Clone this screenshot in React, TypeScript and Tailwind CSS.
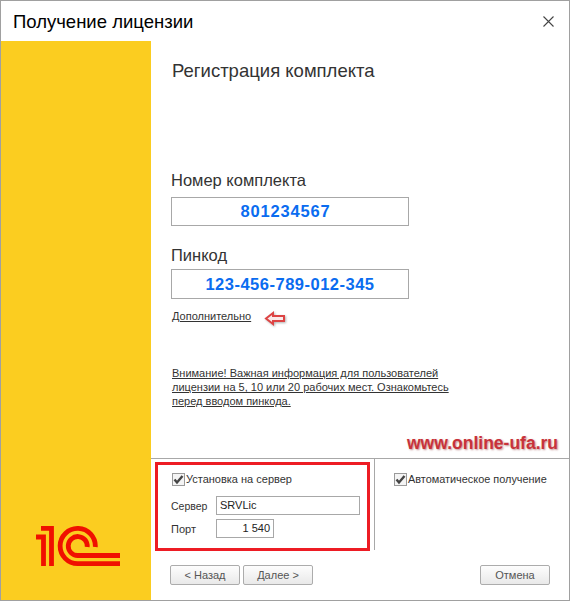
const small = 'text-[11px] leading-[14px] text-[#333]';

function CheckBox() {
    return (
        <span className="w-[13px] h-[13px] border border-[#9a9a9a] bg-[#f4f4f4] flex items-center justify-center shrink-0">
            <svg width="11" height="11" viewBox="0 0 11 11">
                <path d="M1.500 5.500 L4 8.500 L9.500 2" fill="none" stroke="#444" strokeWidth="2.400" />
            </svg>
        </span>
    );
}

function Btn({ label, width }: { label: string; width: string }) {
    return (
        <button className={`${width} h-[20px] border border-[#acacac] rounded-[2px] bg-gradient-to-b from-[#fdfdfd] to-[#e9e9e9] text-[11px] leading-[16px] text-[#555]`}>
            {label}
        </button>
    );
}

function Logo1C() {
    return (
        <svg width="85" height="41" viewBox="0 0 85 41" fill="none" stroke="#f01000" strokeWidth="4.800">
            <path d="M0 11 H7.500 V40" />
            <path d="M5 2.400 H15.500 V40" />
            <path d="M59.300 21 A17.600 17.600 0 1 0 41.700 37.600 H84" />
            <path d="M51.200 21 A9.500 9.500 0 1 0 41.700 29.500 H84" />
        </svg>
    );
}

export default function App() {
    return (
        <div className="relative w-[570px] h-[601px] bg-white border border-[#a0a0a0] flex flex-col font-['Liberation_Sans',sans-serif] overflow-hidden">
            <div className="h-[40px] shrink-0 flex items-center justify-between pl-3 pr-[15px] pt-[1px]">
                <h1 className="text-[18.500px] leading-[22px] text-black">Получение лицензии</h1>
                <svg width="11" height="11" viewBox="0 0 11 11">
                    <path d="M0.500 0.500 L10.500 10.500 M10.500 0.500 L0.500 10.500" stroke="#444" strokeWidth="1.100" />
                </svg>
            </div>

            <div className="flex flex-1">
                <div className="w-[150px] bg-[#fbcd20] flex items-end pl-[35px] pb-[33px]">
                    <Logo1C />
                </div>

                <div className="flex-1 flex flex-col">
                    <div className="h-[417px] pl-[20px] pt-[19px]">
                        <h2 className="ml-[1px] text-[18.500px] leading-[22px] text-[#333]">Регистрация комплекта</h2>

                        <p className="mt-[88px] text-[16.500px] leading-[20px] text-[#333]">Номер комплекта</p>
                        <div className="mt-[7px] w-[238px] h-[29px] border border-[#a8a8a8] flex items-center justify-center pr-[9px] text-[16.500px] font-bold tracking-[0.800px] text-[#0a6cf0]">
                            801234567
                        </div>

                        <p className="mt-[19px] text-[16.500px] leading-[20px] text-[#333]">Пинкод</p>
                        <div className="mt-[4px] w-[238px] h-[30px] border border-[#a8a8a8] flex items-center justify-center text-[16.500px] font-bold tracking-[0.500px] text-[#0a6cf0]">
                            123-456-789-012-345
                        </div>

                        <a className={`block ml-[1px] mt-[10px] w-fit underline ${small}`}>Дополнительно</a>

                        <p className="ml-[1px] mt-[43px] underline text-[11px] leading-[14px] text-[#333] w-[290px]">
                            Внимание! Важная информация для пользователей
                            <br />
                            лицензии на 5, 10 или 20 рабочих мест. Ознакомьтесь
                            <br />
                            перед вводом пинкода.
                        </p>
                    </div>

                    <div className="border-t border-[#a8a8a8] flex h-[92px]">
                        <div className="w-[224px] border-r border-[#a8a8a8] pl-[20px] pt-[13px]">
                            <label className={`ml-[1px] flex items-center gap-[1px] ${small}`}>
                                <CheckBox />
                                Установка на сервер
                            </label>
                            <div className={`mt-[10px] flex items-center ${small}`}>
                                <span className="w-[45px] text-[10.500px]">Сервер</span>
                                <div className="w-[144px] h-[19px] border border-[#a8a8a8] pl-[3px] text-[11px] leading-[17px] text-[#222]">SRVLic</div>
                            </div>
                            <div className={`mt-[4px] flex items-center ${small}`}>
                                <span className="w-[45px]">Порт</span>
                                <div className="w-[58px] h-[19px] border border-[#a8a8a8] pr-[3px] text-right text-[11px] leading-[17px] text-[#222]">1 540</div>
                            </div>
                        </div>
                        <div className="pl-[19px] pt-[13px]">
                            <label className="flex items-center gap-[1px] text-[10.900px] leading-[14px] text-[#333]">
                                <CheckBox />
                                Автоматическое получение
                            </label>
                        </div>
                    </div>

                    <div className="flex-1 flex items-start pl-[19px] pr-[19px] pt-[15px] gap-[3px]">
                        <Btn label="< Назад" width="w-[70px]" />
                        <Btn label="Далее >" width="w-[70px]" />
                        <div className="flex-1" />
                        <Btn label="Отмена" width="w-[70px]" />
                    </div>
                </div>
            </div>

            {/* annotations drawn on top of the screenshot */}
            <div className="absolute left-[154px] top-[461px] w-[215px] h-[89px] border-[3px] border-[#ed1c24]" />
            <svg className="absolute left-[263px] top-[309px] drop-shadow-[1px_1px_1px_rgba(0,0,0,0.3)]" width="22" height="17" viewBox="0 0 22 17">
                <path d="M2 8.500 L9 3 V6 H20 V11 H9 V14 Z" fill="#fbeaea" stroke="#d44" strokeWidth="2" />
            </svg>
            <span className="absolute left-[406px] top-[432px] text-[17.500px] leading-[20px] font-bold text-[#c8323a] [text-shadow:1px_1px_2px_rgba(120,0,0,0.45)]">
                www.online-ufa.ru
            </span>
        </div>
    );
}
